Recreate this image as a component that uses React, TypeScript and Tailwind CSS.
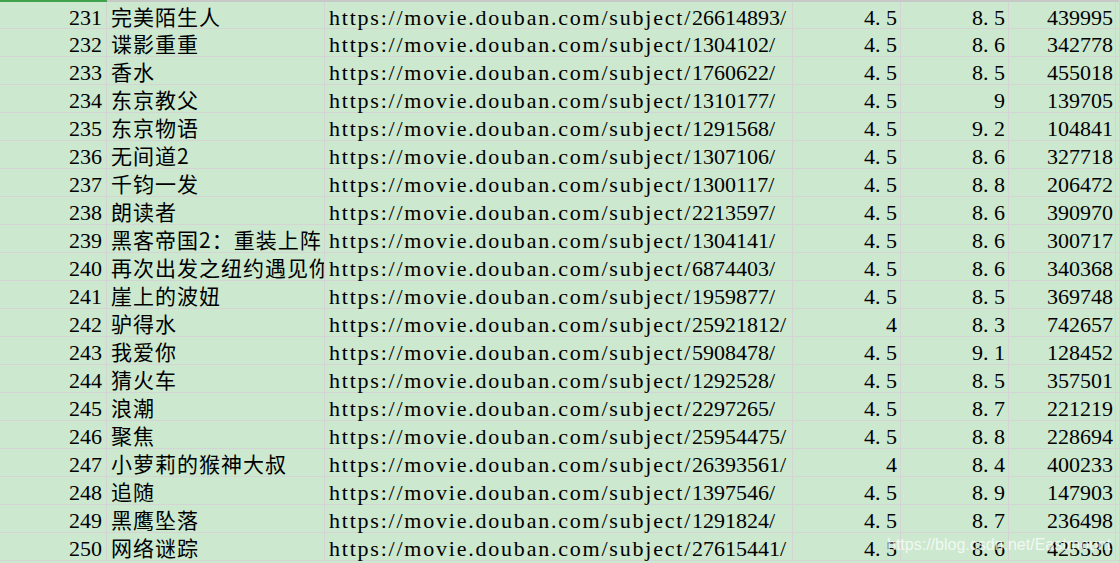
const rows: [number, string, string, string, string, string][] = [
  [231, "完美陌生人", "26614893", "4.5", "8.5", "439995"],
  [232, "谍影重重", "1304102", "4.5", "8.6", "342778"],
  [233, "香水", "1760622", "4.5", "8.5", "455018"],
  [234, "东京教父", "1310177", "4.5", "9", "139705"],
  [235, "东京物语", "1291568", "4.5", "9.2", "104841"],
  [236, "无间道2", "1307106", "4.5", "8.6", "327718"],
  [237, "千钧一发", "1300117", "4.5", "8.8", "206472"],
  [238, "朗读者", "2213597", "4.5", "8.6", "390970"],
  [239, "黑客帝国2：重装上阵", "1304141", "4.5", "8.6", "300717"],
  [240, "再次出发之纽约遇见你", "6874403", "4.5", "8.6", "340368"],
  [241, "崖上的波妞", "1959877", "4.5", "8.5", "369748"],
  [242, "驴得水", "25921812", "4", "8.3", "742657"],
  [243, "我爱你", "5908478", "4.5", "9.1", "128452"],
  [244, "猜火车", "1292528", "4.5", "8.5", "357501"],
  [245, "浪潮", "2297265", "4.5", "8.7", "221219"],
  [246, "聚焦", "25954475", "4.5", "8.8", "228694"],
  [247, "小萝莉的猴神大叔", "26393561", "4", "8.4", "400233"],
  [248, "追随", "1397546", "4.5", "8.9", "147903"],
  [249, "黑鹰坠落", "1291824", "4.5", "8.7", "236498"],
  [250, "网络谜踪", "27615441", "4.5", "8.6", "425530"],
];

// Times-metric serif: digits are 11px wide at 22px, like the sheet's half-width font
const serif = "font-['Liberation_Serif',serif] text-[22px] leading-[20px] pt-[6px]";
const cjk = "font-['Noto_Sans_CJK_SC',sans-serif] text-[21px] tracking-[1px] leading-[20px] pt-[4px]";
const line = "border-r border-[#d4d4d4]";

function Num({ v }: { v: string }) {
  const [int, dec] = v.split(".");
  return (
    <>
      {int}
      {dec !== undefined && (
        <>
          <span className="inline-block w-[11px] text-left">.</span>
          {dec}
        </>
      )}
    </>
  );
}

export default function App() {
  return (
    <div className="relative w-[1119px] h-[563px] overflow-hidden bg-[#cce8cf] text-black">
      {/* top edge */}
      <div className="flex h-[2px]">
        <div className="w-[107px] bg-[#3fa34d]" />
        <div className="flex-1 bg-[#c6c9c6]" />
      </div>

      {rows.map(([n, name, id, a, b, c], i) => (
        <div
          key={n}
          className={`grid grid-cols-[107px_218px_468px_108px_108px_107px_1fr] border-b border-[#d4d4d4] ${
            i === 0 ? "h-[27px]" : "h-[28px]"
          }`}
        >
          <div className={`${line} ${serif} text-right pr-[4px]`}>{n}</div>
          <div className={`${line} ${cjk} overflow-hidden whitespace-nowrap pl-[4px]`}>{name}</div>
          <div className={`${line} ${serif} pl-[4px] whitespace-nowrap`}>
            <span className="tracking-[1.78px]">https://movie.douban.com/subject/</span>
            {id}
            <span className="tracking-[1.78px]">/</span>
          </div>
          <div className={`${line} ${serif} text-right pr-[3px]`}>
            <Num v={a} />
          </div>
          <div className={`${line} ${serif} text-right pr-[3px]`}>
            <Num v={b} />
          </div>
          <div className={`${line} ${serif} text-right pr-[2px]`}>{c}</div>
          <div />
        </div>
      ))}

      <div className="absolute left-[887px] top-[535px] font-['Liberation_Sans',sans-serif] text-[16px] leading-[20px] text-white/75">
        https://blog.csdn.net/Eastmount
      </div>
    </div>
  );
}
